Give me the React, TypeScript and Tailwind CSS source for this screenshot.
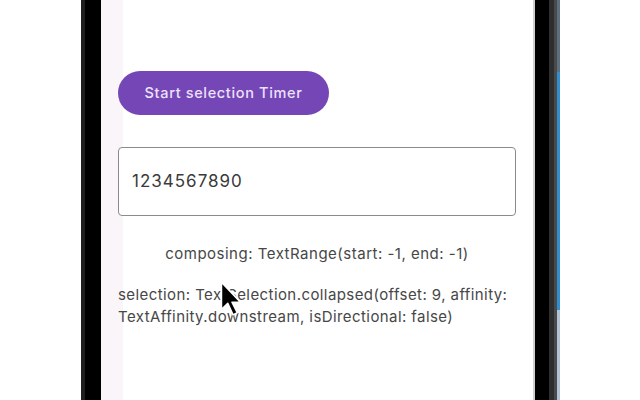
export default function App() {
  return (
    <div
      className="flex h-[400px] w-[640px] overflow-hidden bg-white"
      style={{ fontFamily: "Inter, Roboto, 'Noto Sans', sans-serif" }}
    >
      <div className="w-[81px] shrink-0 bg-white" />
      {/* left bezel */}
      <div className="w-[4px] shrink-0 bg-[#1e1e1e]" />
      <div className="w-[16px] shrink-0 bg-black" />

      {/* phone screen */}
      <div className="relative flex w-[432px] shrink-0 flex-col bg-[linear-gradient(to_right,#f9f5f9_22px,#ffffff_22px)] pl-[17px] pr-[17px]">
        <div className="pt-[71px]">
          <button className="h-[44px] w-[211px] rounded-full bg-[#7446b6] text-[14.5px] font-medium tracking-[0.65px] text-[#ece2fa]">
            Start selection Timer
          </button>
        </div>

        <div className="mt-[32px] flex h-[69px] items-center rounded-[4px] border border-[#8c8a8f] bg-white px-[13px]">
          <span className="text-[17px] tracking-[1px] text-[#3a3a3a]">1234567890</span>
        </div>

        <p className="mt-[28px] text-center text-[15px] leading-[20px] tracking-[0.5px] text-[#474747]">
          composing: TextRange(start: -1, end: -1)
        </p>

        <div className="mt-[20px] text-[15px] leading-[22px] tracking-[0.42px] text-[#474747]">
          <div className="whitespace-nowrap">selection: TextSelection.collapsed(offset: 9, affinity:</div>
          <div className="whitespace-nowrap">TextAffinity.downstream, isDirectional: false)</div>
        </div>

        {/* mouse pointer over the text */}
        <svg
          className="absolute left-[117px] top-[280px]"
          width="28"
          height="38"
          viewBox="0 0 26 36"
        >
          <path
            d="M3 2 L3 28 L9 22 L14 33 L18 31 L13 21 L21 21 Z"
            fill="#000"
            stroke="#fff"
            strokeWidth="1.5"
            strokeLinejoin="round"
          />
        </svg>
      </div>

      {/* right bezel */}
      <div className="w-[2px] shrink-0 bg-[#cfcfcf]" />
      <div className="w-[14px] shrink-0 bg-black" />
      <div className="w-[5px] shrink-0 bg-[#2e2e2e]" />
      <div className="w-[3px] shrink-0 bg-[#4a4a4a]" />
      <div className="flex w-[3px] shrink-0 flex-col">
        <div className="h-[72px] bg-[#5e6f80]" />
        <div className="h-[238px] bg-[#2f8fd0]" />
        <div className="flex-1 bg-[#b3c1d4]" />
      </div>
      <div className="flex-1 bg-white" />
    </div>
  );
}
